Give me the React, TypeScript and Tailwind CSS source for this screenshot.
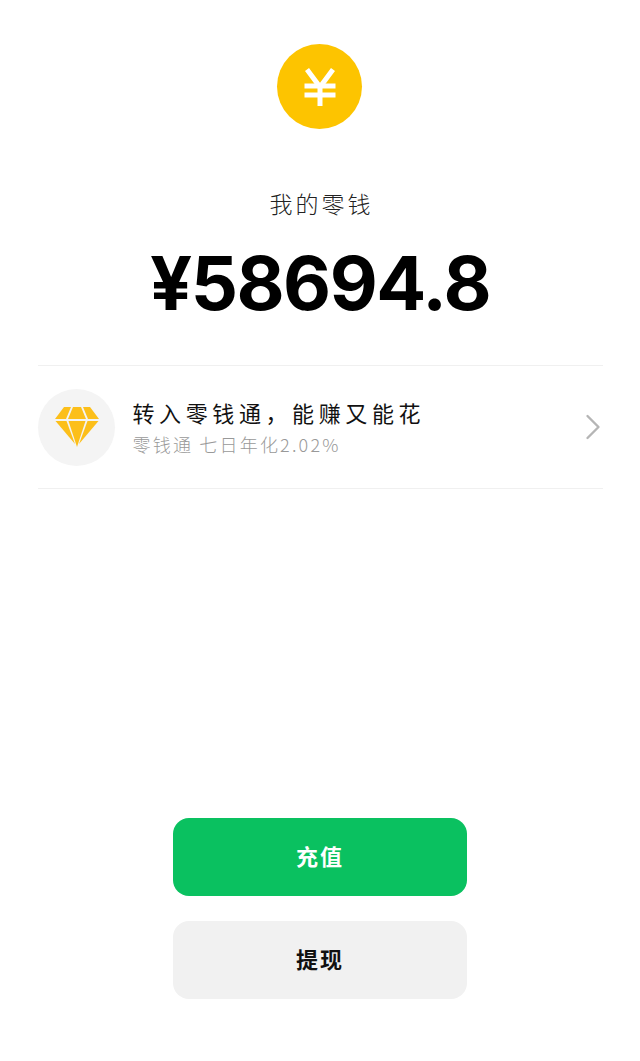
import React from 'react';
import { ChevronRight } from 'lucide-react';

const cjk = "font-['Noto_Sans_CJK_SC','Noto_Sans',sans-serif]";

const App: React.FC = () => {
  return (
    <div className="h-[1061px] bg-white flex flex-col items-center overflow-hidden">
      {/* Coin */}
      <div className="mt-[44px] mr-[1px] w-[85px] h-[85px] rounded-full bg-[#fdc400] flex items-center justify-center">
        <svg width="32" height="38" viewBox="0 0 32 38" fill="none" stroke="#fff" strokeWidth="5">
          <path d="M3 1.5 L16 19 L29 1.5" />
          <path d="M16 19 V38" />
          <path d="M0.5 18 H31.5" />
          <path d="M0.5 27 H31.5" />
        </svg>
      </div>

      <div className={`${cjk} mt-[58px] ml-[3px] h-[32px] leading-[32px] text-[23px] tracking-[3px] text-[#222] font-light`}>
        我的零钱
      </div>

      <div className="mt-[25px] h-[78px] leading-[78px] text-[74px] font-bold text-black font-['Inter',sans-serif] tracking-[-1.5px]">
        ¥58694.8
      </div>

      {/* Row */}
      <div className="mt-[43px] w-[565px] h-[124px] border-y border-[#f0f0f0] flex items-center">
        <div className="w-[77px] h-[77px] rounded-full bg-[#f4f4f4] flex items-center justify-center shrink-0">
          <svg width="44" height="40" viewBox="0 0 44 40" fill="#fcbf1a" className="ml-[1px]">
            <path d="M9 0 H16 L11 12 H0 Z" />
            <path d="M18 0 H26 L31 12 H13 Z" />
            <path d="M28 0 H35 L44 12 H33 Z" />
            <path d="M0.5 14 H11.5 L20 37 Z" />
            <path d="M13.5 14 H30.5 L22 40 Z" />
            <path d="M32.5 14 H43.5 L24 37 Z" />
          </svg>
        </div>
        <div className={`${cjk} ml-[18px] flex-1 flex flex-col`}>
          <div className="h-[28px] leading-[28px] text-[22px] tracking-[4.6px] text-[#111] whitespace-nowrap">
            转入零钱通，能赚又能花
          </div>
          <div className="mt-[6px] h-[24px] leading-[24px] text-[18px] tracking-[2.2px] text-[#999] font-light whitespace-nowrap">
            零钱通 七日年化2.02%
          </div>
        </div>
        <ChevronRight size={44} strokeWidth={1.3} className="text-[#b5b5b5] mr-[-12px] shrink-0" />
      </div>

      {/* Buttons */}
      <button className={`${cjk} mt-[329px] w-[294px] h-[78px] pb-[4px] rounded-[16px] bg-[#0ac160] text-white text-[22px] font-bold tracking-[2px]`}>
        充值
      </button>
      <button className={`${cjk} mt-[25px] w-[294px] h-[78px] pb-[4px] rounded-[16px] bg-[#f1f1f1] text-[#111] text-[22px] font-bold tracking-[2px]`}>
        提现
      </button>
    </div>
  );
};

export default App;
